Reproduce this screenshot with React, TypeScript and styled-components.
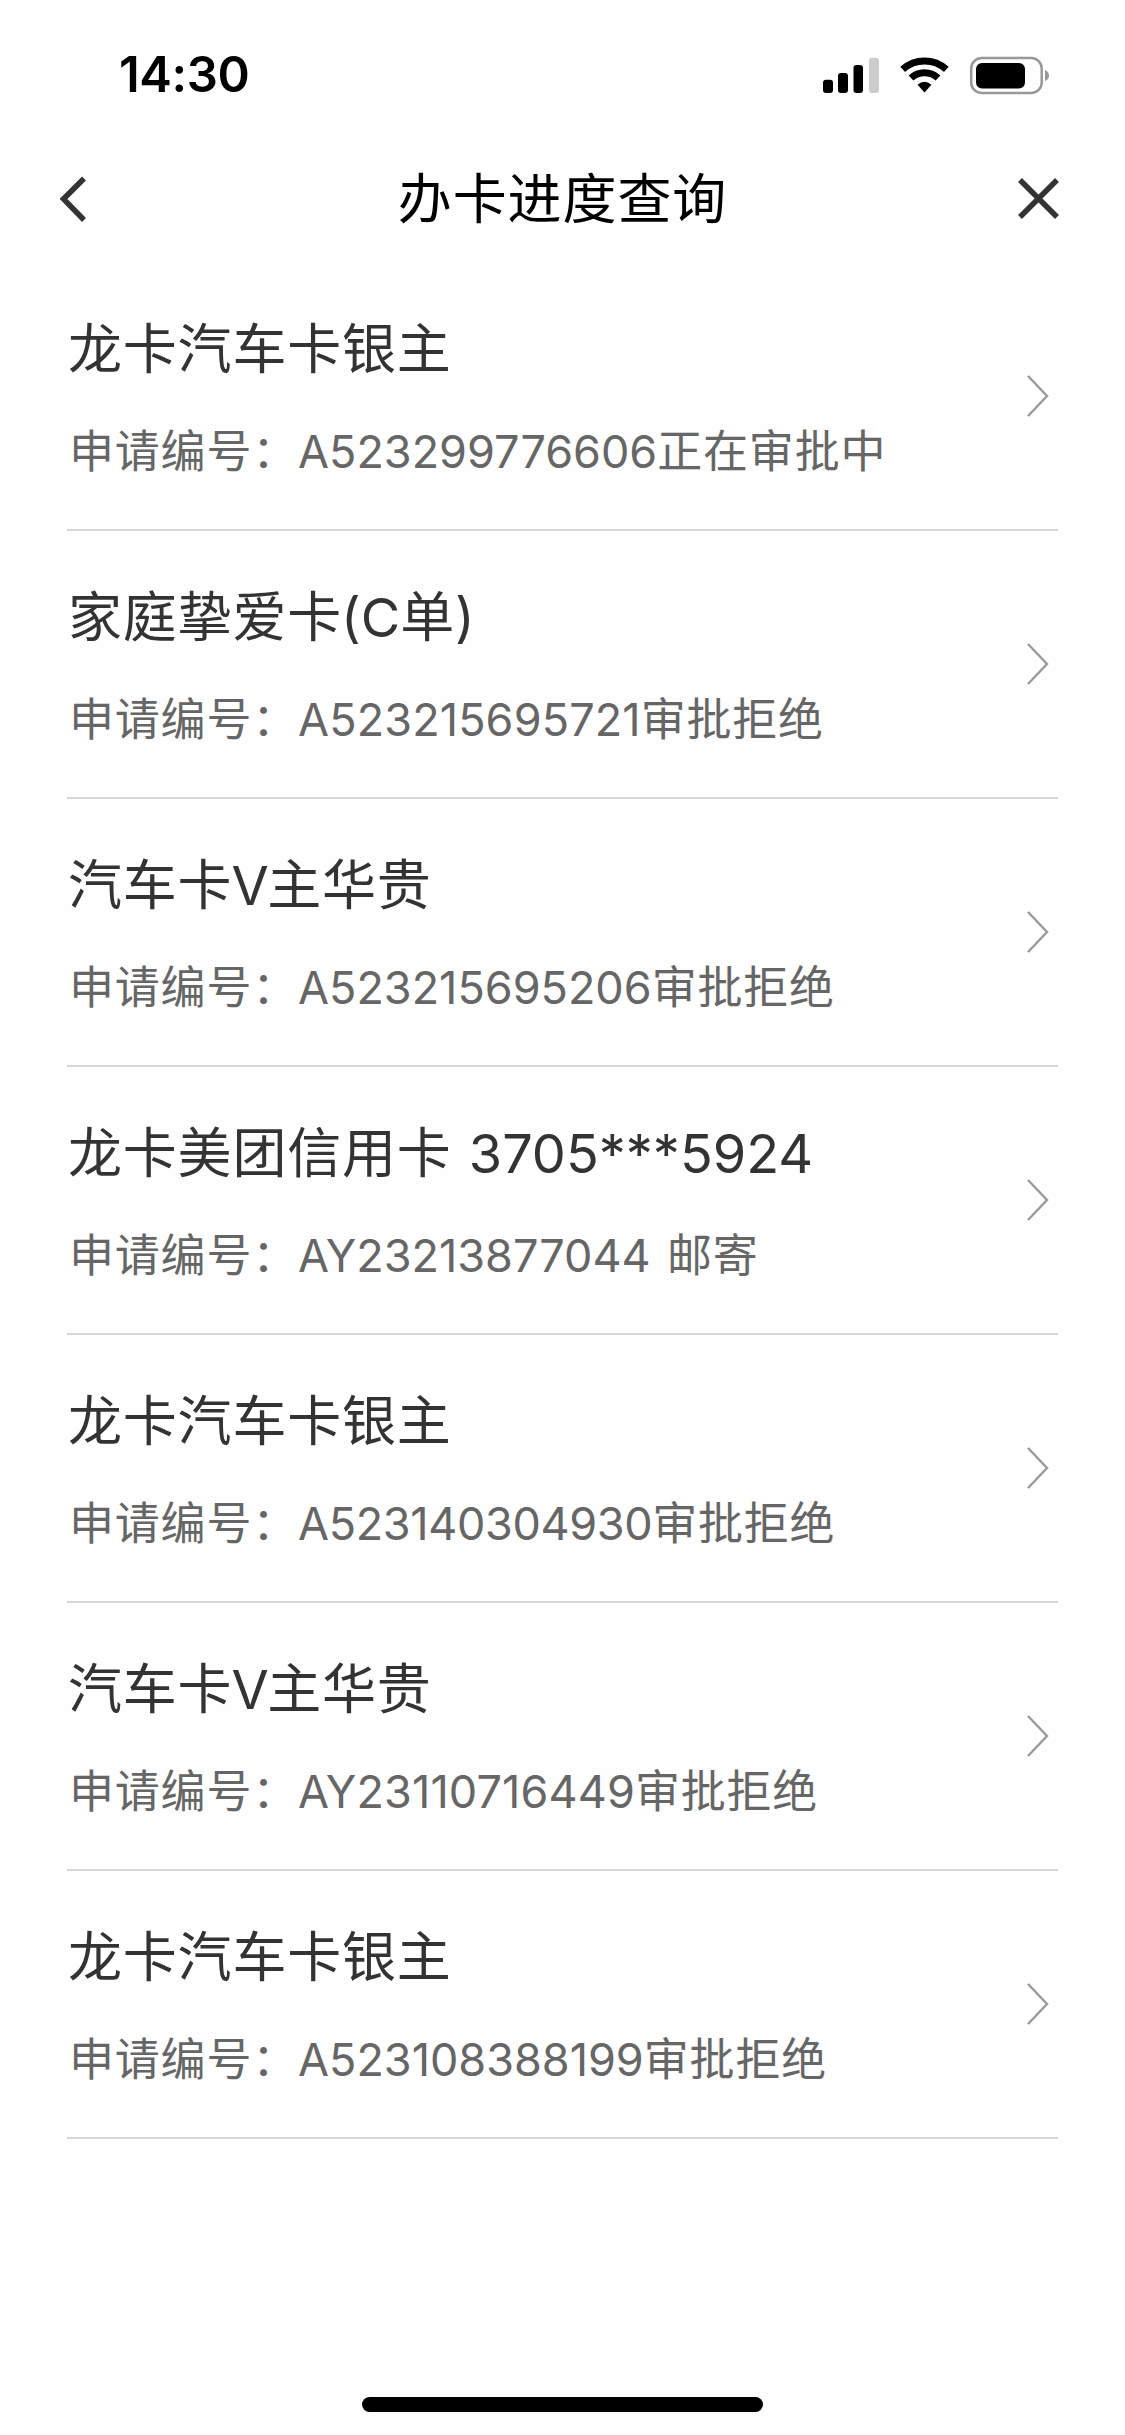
import React from "react";
import styled, { createGlobalStyle } from "styled-components";

const GlobalStyle = createGlobalStyle`
  * { box-sizing: border-box; }
  html, body { margin: 0; padding: 0; background: #fefefe; }
`;

const Screen = styled.div`
  width: 1125px;
  height: 2435px;
  display: flex;
  flex-direction: column;
  background: #fefefe;
  overflow: hidden;
  font-family: Inter, "Noto Sans CJK SC", sans-serif;
`;

const StatusBar = styled.header`
  height: 132px;
  padding: 17px 76px 0 119px;
  display: flex;
  align-items: center;
  justify-content: space-between;
`;

const Clock = styled.time`
  font-size: 49px;
  line-height: 60px;
  font-weight: 600;
  letter-spacing: -0.4px;
  color: #000;
`;

const StatusIcons = styled.svg`
  width: 228px;
  height: 40px;
  display: block;
`;

const NavBar = styled.nav`
  height: 131px;
  padding: 4px 60px 0;
  display: flex;
  align-items: center;
  justify-content: space-between;
`;

const NavButton = styled.button`
  width: 48px;
  height: 48px;
  padding: 0;
  border: 0;
  background: none;
  display: flex;
  color: #333;
`;

const NavTitle = styled.h1`
  margin: 0;
  font-size: 54px;
  line-height: 80px;
  font-weight: 400;
  letter-spacing: 0.9px;
  color: #000;
`;

const List = styled.main`
  flex: 1;
  padding: 0 67px;
`;

const Row = styled.section`
  height: 268px;
  display: flex;
  align-items: center;
  justify-content: space-between;
  padding: 0 8px 0 1px;
  border-bottom: 2px solid #d6d6d6;
`;

const RowText = styled.div`
  display: flex;
  flex-direction: column;
  gap: 22px;
  padding-top: 9px;
  white-space: pre;
`;

const CardName = styled.h2`
  margin: 0;
  font-size: 54px;
  line-height: 80px;
  font-weight: 400;
  letter-spacing: 0.8px;
  color: #333;
`;

const Detail = styled.p`
  margin: 0;
  padding-left: 1px;
  font-size: 45px;
  line-height: 80px;
  letter-spacing: 0.8px;
  color: #666;
`;

const Latin = styled.span<{ $track?: number; $lead?: number }>`
  margin-left: ${(p) => p.$lead ?? 0}px;
  letter-spacing: ${(p) => p.$track ?? 0}px;
`;

const Arrow = styled.svg`
  width: 24px;
  height: 44px;
  flex: none;
`;

const Footer = styled.footer`
  height: 38px;
  display: flex;
  justify-content: center;
  align-items: flex-start;
`;

const HomeIndicator = styled.div`
  width: 401px;
  height: 15px;
  border-radius: 8px;
  background: #000;
`;

interface Application {
  name: React.ReactNode;
  code: string;
  track?: number;
  status: React.ReactNode;
}

const applications: Application[] = [
  { name: "龙卡汽车卡银主", code: "A523299776606", status: "正在审批中" },
  {
    name: <>家庭挚爱卡<Latin $lead={-1}>(C</Latin>单)</>,
    code: "A523215695721",
    track: 0.12,
    status: "审批拒绝",
  },
  {
    name: <>汽车卡<Latin $track={-1.5} $lead={-1}>V</Latin>主华贵</>,
    code: "A523215695206",
    status: "审批拒绝",
  },
  {
    name: <>龙卡美团信用卡<Latin $lead={2}> 3705***5924</Latin></>,
    code: "AY23213877044",
    status: <Latin $track={0.8} $lead={3}> 邮寄</Latin>,
  },
  { name: "龙卡汽车卡银主", code: "A523140304930", track: -0.35, status: "审批拒绝" },
  {
    name: <>汽车卡<Latin $track={-1.5} $lead={-1}>V</Latin>主华贵</>,
    code: "AY23110716449",
    track: 0.12,
    status: "审批拒绝",
  },
  { name: "龙卡汽车卡银主", code: "A523108388199", status: "审批拒绝" },
];

export default function App() {
  return (
    <>
      <GlobalStyle />
      <Screen lang="zh-CN">
        <StatusBar>
          <Clock>14:30</Clock>
          <StatusIcons viewBox="0 0 228 40">
            <rect x="2" y="24.7" width="10" height="13.3" rx="3" />
            <rect x="17" y="18" width="10" height="20" rx="3" />
            <rect x="32.5" y="10" width="9.5" height="28" rx="3" />
            <rect x="48" y="2.7" width="10" height="35.3" rx="3" fill="#ccc" />
            <g fill="none" stroke="#000" strokeWidth="7">
              <path d="M81.7 14.3A32.5 32.5 0 0 1 125.3 14.3" />
              <path d="M90 23A20 20 0 0 1 117 23" />
            </g>
            <path d="M96.5 29.8Q103.5 23.8 110.5 29.8L103.5 37.5Z" />
            <rect x="150.2" y="3" width="70.5" height="35" rx="10.5" fill="none" stroke="#999" strokeWidth="2.5" />
            <rect x="155" y="8" width="49" height="25.5" rx="6" />
            <path d="M224 15Q228 16.5 228 20.5Q228 24.5 224 26Z" fill="#999" />
          </StatusIcons>
        </StatusBar>
        <NavBar>
          <NavButton aria-label="返回">
            <svg width="48" height="48" viewBox="0 0 48 48" fill="none" stroke="currentColor" strokeWidth="5.5">
              <path d="M24 2.500L3.500 23L24 44" />
            </svg>
          </NavButton>
          <NavTitle>办卡进度查询</NavTitle>
          <NavButton aria-label="关闭">
            <svg width="48" height="48" viewBox="0 0 48 48" fill="none" stroke="currentColor" strokeWidth="5.5">
              <path d="M3 4L40 41M40 4L3 41" />
            </svg>
          </NavButton>
        </NavBar>
        <List>
          {applications.map((item) => (
            <Row key={item.code}>
              <RowText>
                <CardName>{item.name}</CardName>
                <Detail>
                  申请编号：<Latin $track={item.track}>{item.code}</Latin>
                  {item.status}
                </Detail>
              </RowText>
              <Arrow viewBox="0 0 24 44" fill="none" stroke="#999" strokeWidth="2.4">
                <path d="M2 2L21 22L2 42" />
              </Arrow>
            </Row>
          ))}
        </List>
        <Footer>
          <HomeIndicator />
        </Footer>
      </Screen>
    </>
  );
}
